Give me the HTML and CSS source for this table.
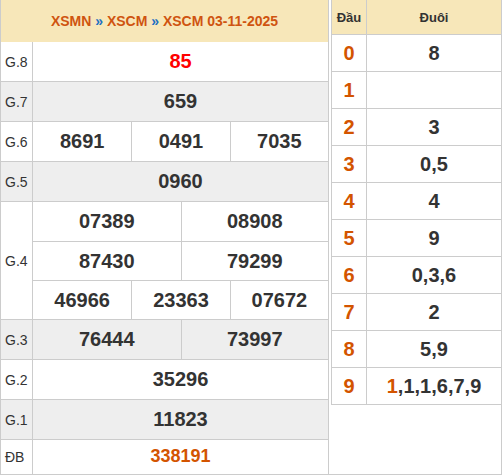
FILE: index.html
```html
<!DOCTYPE html>
<html lang="vi">
<head>
<meta charset="utf-8">
<title>XSCM 03-11-2025</title>
<link rel="stylesheet" href="styles.css">
</head>
<body>
<div class="page">
  <div class="kq">
    <div class="kq-head">XSMN <span class="sep">»</span> XSCM <span class="sep">»</span> XSCM 03-11-2025</div>
    <div class="row">
      <div class="lbl">G.8</div>
      <div class="vals"><div class="sub c1"><div class="v red">85</div></div></div>
    </div>
    <div class="row alt">
      <div class="lbl">G.7</div>
      <div class="vals"><div class="sub c1"><div class="v">659</div></div></div>
    </div>
    <div class="row">
      <div class="lbl">G.6</div>
      <div class="vals"><div class="sub c3"><div class="v">8691</div><div class="v">0491</div><div class="v">7035</div></div></div>
    </div>
    <div class="row alt">
      <div class="lbl">G.5</div>
      <div class="vals"><div class="sub c1"><div class="v">0960</div></div></div>
    </div>
    <div class="row">
      <div class="lbl">G.4</div>
      <div class="vals">
        <div class="sub c2"><div class="v">07389</div><div class="v">08908</div></div>
        <div class="sub c2"><div class="v">87430</div><div class="v">79299</div></div>
        <div class="sub c3"><div class="v">46966</div><div class="v">23363</div><div class="v">07672</div></div>
      </div>
    </div>
    <div class="row alt">
      <div class="lbl">G.3</div>
      <div class="vals"><div class="sub c2"><div class="v">76444</div><div class="v">73997</div></div></div>
    </div>
    <div class="row">
      <div class="lbl">G.2</div>
      <div class="vals"><div class="sub c1"><div class="v">35296</div></div></div>
    </div>
    <div class="row alt">
      <div class="lbl">G.1</div>
      <div class="vals"><div class="sub c1"><div class="v">11823</div></div></div>
    </div>
    <div class="row db">
      <div class="lbl">ĐB</div>
      <div class="vals"><div class="sub c1"><div class="v special">338191</div></div></div>
    </div>
  </div>
  <div class="side">
    <div class="loto">
      <div class="lrow lhead"><div class="dau">Đầu</div><div class="duoi">Đuôi</div></div>
      <div class="lrow"><div class="dau">0</div><div class="duoi">8</div></div>
      <div class="lrow"><div class="dau">1</div><div class="duoi"></div></div>
      <div class="lrow"><div class="dau">2</div><div class="duoi">3</div></div>
      <div class="lrow"><div class="dau">3</div><div class="duoi">0,5</div></div>
      <div class="lrow"><div class="dau">4</div><div class="duoi">4</div></div>
      <div class="lrow"><div class="dau">5</div><div class="duoi">9</div></div>
      <div class="lrow"><div class="dau">6</div><div class="duoi">0,3,6</div></div>
      <div class="lrow"><div class="dau">7</div><div class="duoi">2</div></div>
      <div class="lrow"><div class="dau">8</div><div class="duoi">5,9</div></div>
      <div class="lrow"><div class="dau">9</div><div class="duoi"><span class="hl">1</span>,1,1,6,7,9</div></div>
    </div>
  </div>
</div>
</body>
</html>
```

FILE: styles.css
```css
* { box-sizing: border-box; }

body {
  margin: 0;
  font-family: "Liberation Sans", Arial, sans-serif;
  color: #333;
  background: #fff;
}

.page {
  display: flex;
  width: 502px;
  height: 475px;
}

/* Result table */
.kq {
  width: 329px;
  height: 475px;
  border-left: 1px solid #ccc;
  border-right: 1px solid #ccc;
  display: flex;
  flex-direction: column;
}

.kq-head {
  height: 42px;
  background: #f7e7b9;
  display: flex;
  align-items: center;
  justify-content: center;
  font-size: 14px;
  font-weight: bold;
  color: #cf5410;
  white-space: pre;
}

.kq-head .sep { color: #1d6fc2; }

.row {
  display: flex;
  border-bottom: 1px solid #ccc;
}

.row.alt { background: #eee; }

.lbl {
  width: 32px;
  flex: none;
  border-right: 1px solid #ccc;
  display: flex;
  align-items: center;
  padding-left: 4px;
  font-size: 14px;
  color: #333;
}

.vals {
  flex: 1;
  display: flex;
  flex-direction: column;
}

.sub {
  display: grid;
  height: 39px;
}

.sub + .sub { border-top: 1px solid #ccc; }

.c1 { grid-template-columns: 1fr; }
.c2 { grid-template-columns: 1fr 1fr; }
.c3 { grid-template-columns: 1fr 1fr 1fr; }

.v {
  display: flex;
  align-items: center;
  justify-content: center;
  font-size: 20px;
  font-weight: bold;
  color: #333;
}

.v + .v { border-left: 1px solid #ccc; }

.v.red { color: #f00; }

.row.db { flex: 1; }
.row.db .sub { height: 32px; }

.v.special {
  font-size: 18px;
  color: #d35400;
  padding-top: 1px;
}

/* Loto table */
.side {
  width: 173px;
  height: 475px;
  padding-left: 2px;
  border-right: 1px solid #ccc;
  border-bottom: 1px solid #ccc;
}

.loto {
  border-left: 1px solid #ccc;
}

.lrow {
  display: flex;
  height: 37px;
  border-bottom: 1px solid #ccc;
}

.lrow.lhead {
  height: 35px;
  background: #f7e7b9;
}

.dau {
  width: 35px;
  flex: none;
  border-right: 1px solid #ccc;
  display: flex;
  align-items: center;
  justify-content: center;
  font-size: 20px;
  font-weight: bold;
  color: #d35400;
}

.duoi {
  flex: 1;
  display: flex;
  align-items: center;
  justify-content: center;
  font-size: 20px;
  font-weight: bold;
  color: #333;
}

.lhead .dau,
.lhead .duoi {
  font-size: 13px;
  color: #333;
}

.hl { color: #d35400; }
```
